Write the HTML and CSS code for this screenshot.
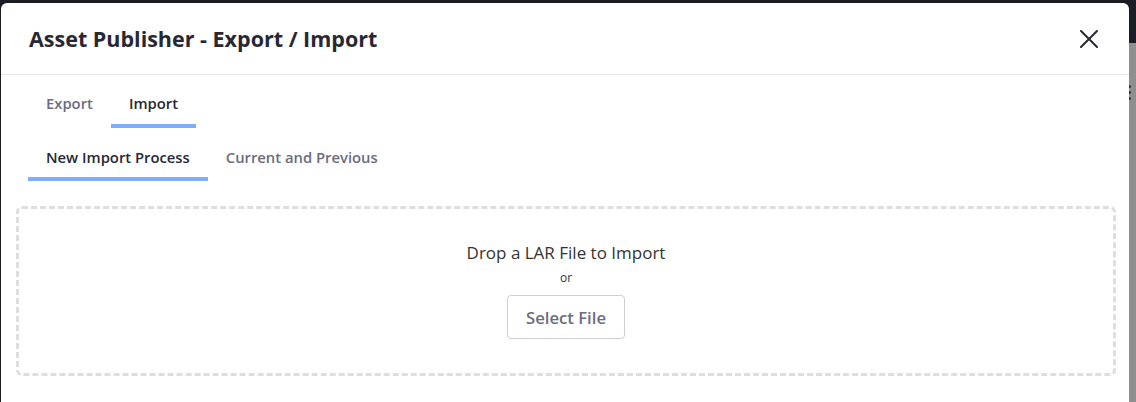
FILE: index.html
```html
<!DOCTYPE html>
<html lang="en">
<head>
<meta charset="utf-8">
<title>Asset Publisher - Export / Import</title>
<link rel="stylesheet" href="styles.css">
</head>
<body>
<div class="page">
  <div class="page-top"></div>
  <div class="page-rest">
    <div class="kebab"><span></span><span></span><span></span></div>
  </div>
</div>
<div class="modal">
  <div class="modal-header">
    <h1 class="modal-title">Asset Publisher - Export / Import</h1>
    <button class="close" aria-label="Close">
      <svg viewBox="0 0 18 18" width="18" height="18"><path d="M1 1 L17 17 M17 1 L1 17" stroke="#272833" stroke-width="2" fill="none" stroke-linecap="round"/></svg>
    </button>
  </div>
  <div class="modal-body">
    <nav class="tabs">
      <a class="tab">Export</a>
      <a class="tab active">Import</a>
    </nav>
    <nav class="tabs tabs-sub">
      <a class="tab active">New Import Process</a>
      <a class="tab">Current and Previous</a>
    </nav>
    <div class="dropzone">
      <p class="drop-text">Drop a LAR File to Import</p>
      <p class="drop-or">or</p>
      <button class="btn">Select File</button>
    </div>
  </div>
</div>
</body>
</html>
```
FILE: styles.css
```css
* { box-sizing: border-box; }
html, body { margin: 0; padding: 0; }
body {
  width: 1136px;
  height: 402px;
  overflow: hidden;
  background: #1c1c24;
  font-family: "Open Sans", "Noto Sans", sans-serif;
  color: #272833;
}
.page { height: 402px; display: flex; flex-direction: column; }
.page-top { height: 43px; background: #1c1c24; }
.page-rest {
  flex: 1;
  background: #8f8f8f;
  margin-left: 1px;
  display: flex;
  justify-content: flex-end;
  padding-top: 42px;
}
.kebab { display: flex; flex-direction: column; gap: 3px; width: 8px; }
.kebab span { width: 3px; height: 3px; border-radius: 50%; background: #333; }

.modal {
  position: absolute;
  left: 1px;
  top: 3px;
  width: 1128px;
  height: 399px;
  overflow: hidden;
  background: #fff;
  border-radius: 6px 6px 0 0;
}
.modal-header {
  height: 72px;
  border-bottom: 1px solid #e7e7ed;
  display: flex;
  align-items: center;
  justify-content: space-between;
  padding: 0 30px 0 28px;
}
.modal-title {
  margin: 0;
  font-size: 21.5px;
  font-weight: 700;
  line-height: 28px;
  color: #272833;
}
.close {
  border: 0;
  background: none;
  padding: 0;
  width: 20px;
  height: 20px;
  display: flex;
  align-items: center;
  justify-content: center;
}
.modal-body { padding: 0 13px 0 15px; }
.tabs { display: flex; padding-left: 12px; }
.tab {
  height: 53px;
  padding: 18px 18px 0;
  font-size: 14.8px;
  line-height: 20px;
  font-weight: 600;
  color: #6b6c7e;
  border-bottom: 4px solid transparent;
}
.tabs-sub .tab { padding-top: 19px; }
.tab.active { color: #272833; border-bottom-color: #80acff; }
.dropzone {
  margin-top: 25px;
  height: 170px;
  border: 3px dashed #dedede;
  border-radius: 6px;
  display: flex;
  flex-direction: column;
  align-items: center;
  padding-top: 32px;
}
.drop-text {
  margin: 0;
  font-size: 17px;
  line-height: 24px;
  color: #333;
}
.drop-or {
  margin: 4px 0 0;
  font-size: 12px;
  line-height: 18px;
  color: #333;
}
.btn {
  margin-top: 8px;
  height: 44px;
  padding: 0 18px;
  border: 1px solid #cdced9;
  border-radius: 4px;
  background: #fff;
  font-family: inherit;
  font-size: 16.7px;
  font-weight: 600;
  color: #6b6c7e;
}
```
